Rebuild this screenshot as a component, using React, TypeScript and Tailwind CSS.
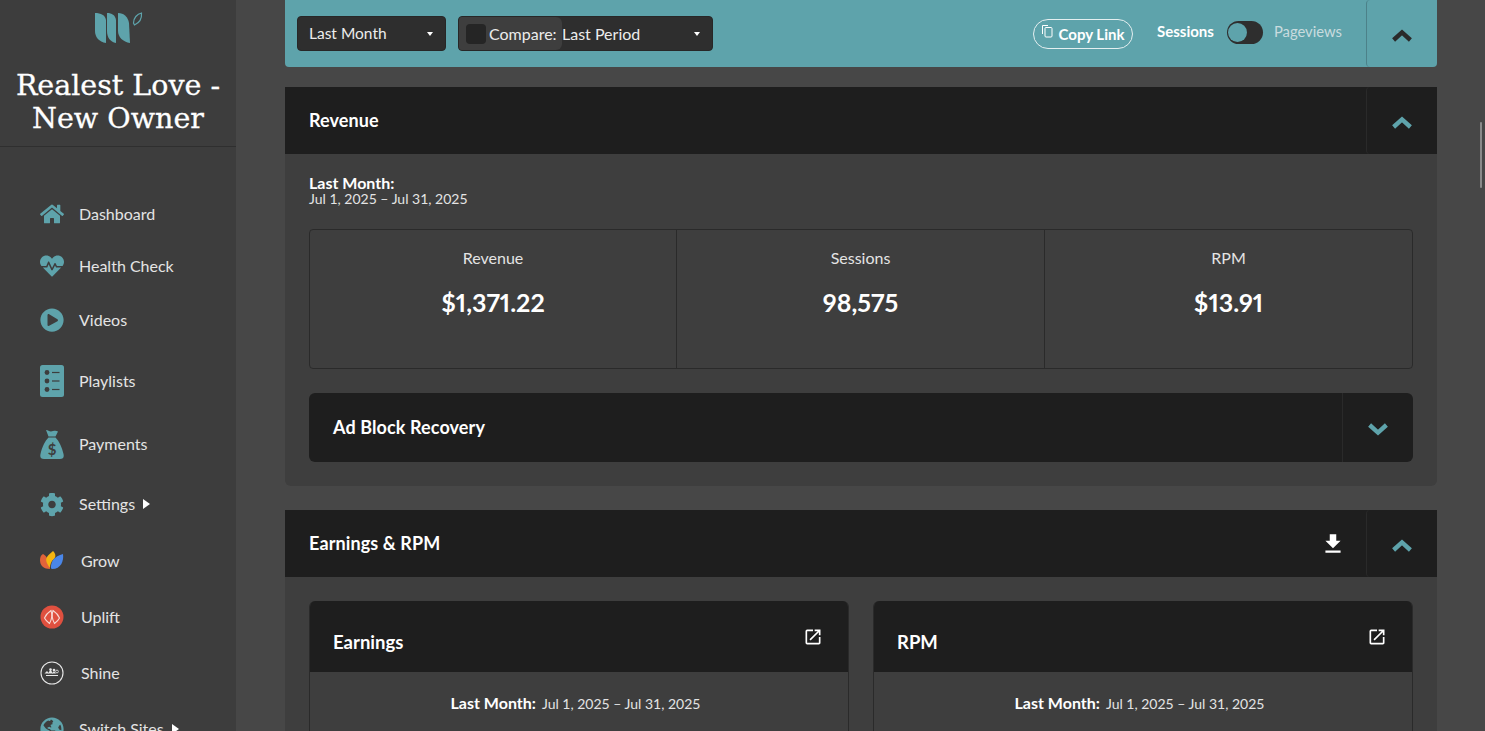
import { FaCog, FaGlobeAmericas, FaHeartbeat, FaHome, FaPlayCircle } from "react-icons/fa";
import { MdFileDownload, MdOpenInNew } from "react-icons/md";
import type { ReactNode } from "react";

const body = "font-['Lato','Liberation_Sans',sans-serif]";

const Logo = () => (
  <svg width="48" height="32" viewBox="0 0 48 32" className="fill-[#5ea3ab]">
    <path d="M0 1 C6 1 10 3 11 8 L11 31 C4 30 0 25 0 19 Z" />
    <path d="M12 1 C17 1 20 3 21 8 L21 31 C15 30 12 25 12 19 Z" />
    <path d="M23 1 C29 1 33 5 34 11 L35 31 C28 30 23 25 23 19 Z" />
    <path d="M38.5 11 C38.5 6 42 2 46.5 1 C47 7 44 11 39.5 13 Z" fill="none" stroke="#5ea3ab" strokeWidth="1.2" />
  </svg>
);

const PlaylistIcon = () => (
  <svg width="24" height="32" viewBox="0 0 24 32">
    <rect width="24" height="32" rx="2.5" fill="#5ea3ab" />
    <g fill="#3d3d3d">
      <circle cx="7" cy="7.5" r="2.4" />
      <circle cx="7" cy="16" r="2.4" />
      <circle cx="7" cy="24.5" r="2.4" />
      <rect x="12" y="6.9" width="7.5" height="1.2" />
      <rect x="12" y="15.4" width="7.5" height="1.2" />
      <rect x="12" y="23.9" width="7.5" height="1.2" />
    </g>
  </svg>
);

const BagIcon = () => (
  <svg width="24" height="31" viewBox="0 0 24 31" className="shrink-0">
    <path
      d="M6 1 C8 1 9 2.5 11 2.5 C13 2.5 15 1 18 2.5 L15.5 7.5 L8.5 7.5 Z"
      fill="#5ea3ab"
    />
    <path
      d="M8.5 8.5 L15.5 8.5 C19 12 22 18 23.5 25 C24.3 28.5 23 30 20 30 L4 30 C1 30 -.3 28.5 .5 25 C2 18 5 12 8.5 8.5 Z"
      fill="#5ea3ab"
    />
    <text x="12" y="25.5" textAnchor="middle" fontSize="15" fontWeight="700" fill="#3d3d3d">
      $
    </text>
  </svg>
);

const GrowIcon = () => (
  <svg width="24" height="20" viewBox="0 0 24 20">
    <path d="M3 3 C7 5 9 10 10 18 C4 18 0 15 0 9 C0 6 1 4 3 3 Z" fill="#e2633a" />
    <path d="M13 0 C16 3 16 6 14 8 C11 10 10 14 10 17 C7 13 5 9 7 6 C8 4 11 2 13 0 Z" fill="#f5b50f" />
    <path d="M23 3 C24 10 21 18 12 18 C10 18 11 12 13 9 C15 6 19 4 23 3 Z" fill="#4a86e8" />
  </svg>
);

const UpliftIcon = () => (
  <svg width="24" height="24" viewBox="0 0 24 24">
    <circle cx="12" cy="12" r="11.5" fill="#e0503f" />
    <g fill="none" stroke="#f6d9d4" strokeWidth="1.1">
      <path d="M11 5.5 C8 7.5 5.5 10.5 4.5 13 C5.5 15 7.5 17 9.5 18.5 C11.5 15 12.5 10 11 5.5 Z" />
      <path d="M13 5.5 C16 7.5 18.5 10.5 19.5 13 C18.5 15 16.5 17 14.5 18.5 C12.5 15 11.5 10 13 5.5 Z" />
    </g>
  </svg>
);

const ShineIcon = () => (
  <svg width="24" height="24" viewBox="0 0 24 24">
    <circle cx="12" cy="12" r="11" fill="none" stroke="#e8e8e8" strokeWidth="1.1" />
    <g fill="#e8e8e8">
      <path d="M4.5 12.5 L7 10 L9 12.5 Z" />
      <path d="M8 12.5 L10.5 8.5 L13 12.5 Z" />
      <circle cx="10.5" cy="8.5" r="1.3" />
      <circle cx="14" cy="9" r="1.3" />
      <path d="M12 12.5 L14 10 L16 12.5 Z" />
    </g>
    <circle cx="17" cy="10.5" r="1.4" fill="none" stroke="#e8e8e8" strokeWidth="0.8" />
    <path d="M6 14.5 L18 14.5" stroke="#e8e8e8" strokeWidth="1" />
  </svg>
);

const Chevron = ({ down, className }: { down?: boolean; className: string }) => (
  <svg width="20" height="13" viewBox="0 0 20 13" className={className} fill="none" stroke="currentColor" strokeWidth="4.4">
    <path d={down ? "M1.6 2 L10 9.6 L18.4 2" : "M1.6 11 L10 3.4 L18.4 11"} />
  </svg>
);

const Caret = () => (
  <svg width="6" height="4" viewBox="0 0 6 4" className="fill-white">
    <path d="M0 0 L6 0 L3 4 Z" />
  </svg>
);

const CopyIcon = () => (
  <svg width="12" height="13" viewBox="0 0 12 13" fill="none" stroke="#fff" strokeWidth="1" className="-mt-[5px]">
    <path d="M.5 9 V.5 H6" />
    <rect x="3" y="2.5" width="7" height="9.5" rx="1" />
  </svg>
);

const NavArrow = () => (
  <svg width="7" height="10" viewBox="0 0 7 10" className="ml-2 fill-white">
    <path d="M0 0 L7 5 L0 10 Z" />
  </svg>
);

const navItems: { label: string; icon: ReactNode; margin: string; textGap?: string; arrow?: boolean }[] = [
  { label: "Dashboard", icon: <FaHome size={24} />, margin: "mt-0" },
  { label: "Health Check", icon: <FaHeartbeat size={24} />, margin: "mt-[28px]" },
  { label: "Videos", icon: <FaPlayCircle size={24} />, margin: "mt-[30px]" },
  { label: "Playlists", icon: <PlaylistIcon />, margin: "mt-[37px]" },
  { label: "Payments", icon: <BagIcon />, margin: "mt-[39px]" },
  { label: "Settings", icon: <FaCog size={25} />, margin: "mt-[36px]", arrow: true },
  { label: "Grow", icon: <GrowIcon />, margin: "mt-[33px]", textGap: "ml-[17px]" },
  { label: "Uplift", icon: <UpliftIcon />, margin: "mt-[32px]", textGap: "ml-[17px]" },
  { label: "Shine", icon: <ShineIcon />, margin: "mt-[32px]", textGap: "ml-[17px]" },
  { label: "Switch Sites", icon: <FaGlobeAmericas size={24} />, margin: "mt-[32px]", arrow: true },
];

const Sidebar = () => (
  <aside className="w-[236px] h-full shrink-0 bg-[#3d3d3d] overflow-hidden">
    <div className="h-[147px] border-b border-[#2f2f2f] flex flex-col items-center pt-[12px]">
      <div className="ml-[1px]">
        <Logo />
      </div>
      <h1 className="mt-[25px] w-[230px] text-center text-white text-[28.5px] leading-[33px] [-webkit-text-stroke:0.3px_white] font-['DejaVu_Serif',serif]">
        Realest Love - New Owner
      </h1>
    </div>
    <nav className="pt-[55px] pl-[40px]">
      {navItems.map((item) => (
        <div key={item.label} className={`${item.margin} flex items-center h-[24px] text-[16px] text-[#e4e4e4]`}>
          <span className="w-[24px] h-[24px] flex items-center justify-center text-[#5ea3ab] shrink-0">{item.icon}</span>
          <span className={item.textGap ?? "ml-[15px]"}>{item.label}</span>
          {item.arrow && <NavArrow />}
        </div>
      ))}
    </nav>
  </aside>
);

const SectionHeader = ({ title, extra }: { title: string; extra?: ReactNode }) => (
  <div className="h-[67px] bg-[#1e1e1e] flex items-center">
    <h2 className="pl-[24px] pb-[1px] text-[18px] tracking-[0.1px] font-bold text-white flex-1">{title}</h2>
    {extra}
    <div className="w-[71px] h-full border-l border-[#2a2a2a] rounded-l-[4px] flex items-center justify-center text-[#5ea3ab]">
      <Chevron className="mt-[4px]" />
    </div>
  </div>
);

const Metric = ({ label, value, last }: { label: string; value: string; last?: boolean }) => (
  <div className={`flex flex-col items-center pt-[19px] ${last ? "" : "border-r border-[#2a2a2a]"}`}>
    <div className="text-[16px] text-[#e4e4e4] leading-[18px]">{label}</div>
    <div className="mt-[20px] text-[25px] font-bold proportional-nums text-white leading-[30px]">{value}</div>
  </div>
);

const ChartCard = ({ title }: { title: string }) => (
  <div className="flex-1 rounded-t-[6px] border-x border-[#2a2a2a] overflow-hidden">
    <div className="h-[71px] bg-[#1e1e1e] relative flex items-center pl-[23px] pt-[12px]">
      <h3 className="text-[18.5px] font-bold text-white">{title}</h3>
      <MdOpenInNew size={20} className="absolute right-[25px] top-[26px] text-white" />
    </div>
    <div className="h-[120px] pt-[19px] pr-[7px] flex justify-center items-baseline gap-[6px] text-[14px] text-[#e4e4e4]">
      <span className="font-bold text-[16px] text-white">Last Month:</span>
      <span>Jul 1, 2025 – Jul 31, 2025</span>
    </div>
  </div>
);

export default function App() {
  return (
    <div className={`${body} w-full h-[731px] flex overflow-hidden bg-[#474747] relative`}>
      <Sidebar />
      <main className="flex-1 h-full pl-[49px] pr-[48px] overflow-hidden">
        <div className="h-[67px] bg-[#5ea3ab] rounded-b-[4px] flex items-center pl-[12px]">
          <div className="w-[149px] h-[35px] rounded-[4px] bg-[#2e2e2e] border border-[#272727] flex items-center justify-between pl-[11px] pr-[12px] text-[15.5px] text-[#ececec]">
            Last Month
            <Caret />
          </div>
          <div className="ml-[12px] w-[255px] h-[35px] rounded-[4px] bg-[#2e2e2e] border border-[#272727] flex items-center overflow-hidden text-[16px] text-[#ececec]">
            <div className="h-full w-[103px] bg-[#3e3e3e] rounded-r-[6px] flex items-center pl-[7px] shrink-0">
              <span className="w-[20px] h-[20px] rounded-[4px] bg-[#252525] mr-[3px] shrink-0" />
              Compare:
            </div>
            <span>Last Period</span>
            <span className="ml-auto mr-[12px]">
              <Caret />
            </span>
          </div>
          <div className="ml-auto w-[100px] h-[30px] mt-[1px] rounded-full border border-[#e4eff0] flex items-center justify-center gap-[5px] text-[15px] font-bold text-white">
            <CopyIcon />
            Copy Link
          </div>
          <span className="ml-[24px] -mt-[4px] text-[15px] font-bold text-white">Sessions</span>
          <div className="ml-[13px] -mt-[2px] w-[36px] h-[23px] rounded-full bg-[#2e2e2e] flex items-center pl-[1px]">
            <span className="w-[19px] h-[19px] rounded-full bg-[#5ea3ab]" />
          </div>
          <span className="ml-[11px] -mt-[4px] text-[14.8px] text-[#c9dcdf]">Pageviews</span>
          <div className="ml-[24px] w-[71px] h-full border-l border-[#4c8189] rounded-l-[4px] flex items-center justify-center text-[#2a2a2a]">
            <Chevron className="mt-[4px]" />
          </div>
        </div>

        <section className="mt-[20px] rounded-b-[6px] overflow-hidden">
          <SectionHeader title="Revenue" />
          <div className="h-[332px] bg-[#3e3e3e] px-[24px] pt-[21px]">
            <div className="text-[16px] leading-[16px] font-bold text-white">Last Month:</div>
            <div className="text-[14px] leading-[15px] text-[#e4e4e4]">Jul 1, 2025 – Jul 31, 2025</div>
            <div className="mt-[23px] h-[140px] rounded-[4px] border border-[#2a2a2a] grid grid-cols-[367px_368px_1fr]">
              <Metric label="Revenue" value="$1,371.22" />
              <Metric label="Sessions" value="98,575" />
              <Metric label="RPM" value="$13.91" last />
            </div>
            <div className="mt-[24px] h-[69px] rounded-[6px] bg-[#1e1e1e] flex items-center">
              <h3 className="pl-[24px] flex-1 text-[18px] tracking-[0.1px] font-bold text-white">Ad Block Recovery</h3>
              <div className="w-[71px] h-full border-l border-[#2a2a2a] flex items-center justify-center text-[#5ea3ab]">
                <Chevron down className="mt-[3px]" />
              </div>
            </div>
          </div>
        </section>

        <section className="mt-[24px]">
          <SectionHeader
            title="Earnings & RPM"
            extra={<MdFileDownload size={26} className="text-white mr-[20px]" />}
          />
          <div className="bg-[#3e3e3e] px-[24px] pt-[24px] flex gap-[24px]">
            <ChartCard title="Earnings" />
            <ChartCard title="RPM" />
          </div>
        </section>
      </main>
      <div className="absolute right-[3px] top-[122px] w-[2px] h-[66px] rounded-full bg-[#8a8a8a]" />
    </div>
  );
}
